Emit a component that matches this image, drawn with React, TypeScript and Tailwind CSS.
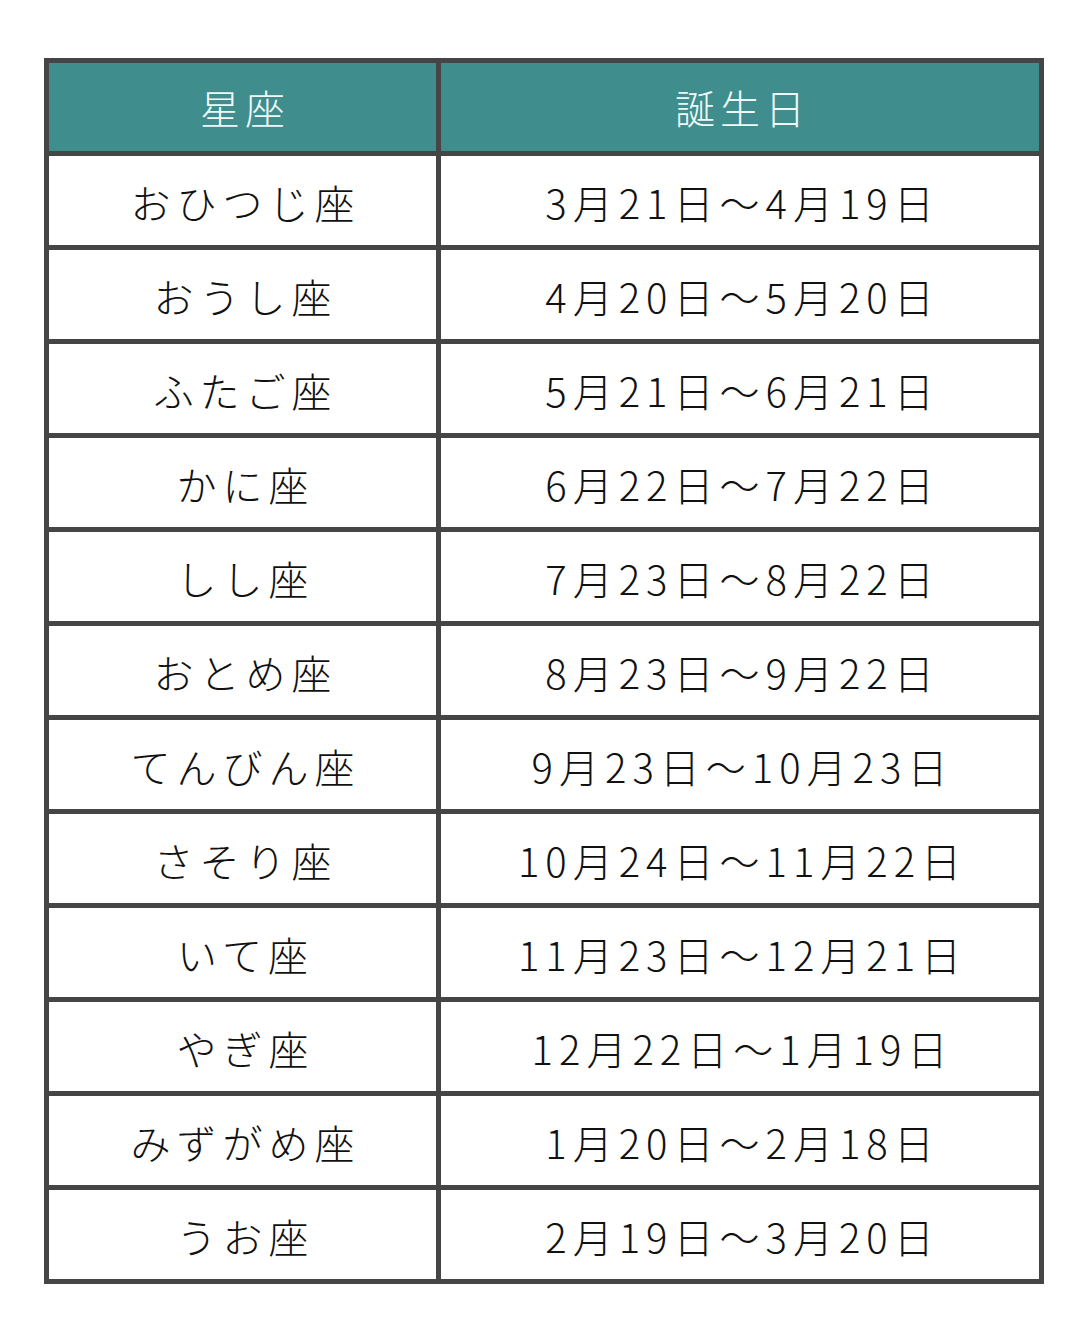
const rows: [string, string][] = [
  ["おひつじ座", "3月21日～4月19日"],
  ["おうし座", "4月20日～5月20日"],
  ["ふたご座", "5月21日～6月21日"],
  ["かに座", "6月22日～7月22日"],
  ["しし座", "7月23日～8月22日"],
  ["おとめ座", "8月23日～9月22日"],
  ["てんびん座", "9月23日～10月23日"],
  ["さそり座", "10月24日～11月22日"],
  ["いて座", "11月23日～12月21日"],
  ["やぎ座", "12月22日～1月19日"],
  ["みずがめ座", "1月20日～2月18日"],
  ["うお座", "2月19日～3月20日"],
];

export default function App() {
  return (
    <div
      className="min-h-[1322px] w-full bg-white pl-[44px] pt-[58px]"
      style={{ fontFamily: '"Noto Sans CJK JP", "Noto Sans", sans-serif' }}
    >
      <div className="grid w-[1000px] grid-cols-[387px_598px] gap-[5px] bg-[#454545] p-[5px]">
        {/* header */}
        <div className="flex h-[88px] items-center justify-center bg-[#3f8d8d] pl-[5px] text-[40px] font-light tracking-[5px] text-[#eefafa]">
          星座
        </div>
        <div className="flex h-[88px] items-center justify-center bg-[#3f8d8d] pl-[5px] text-[40px] font-light tracking-[5px] text-[#eefafa]">
          誕生日
        </div>

        {rows.map(([sign, dates]) => (
          <>
            <div
              key={sign}
              className="flex h-[89px] items-center justify-center bg-white pl-[6px] pt-[2px] text-[40px] font-light tracking-[6px] text-[#111]"
            >
              {sign}
            </div>
            <div
              key={dates}
              className="flex h-[89px] items-center justify-center bg-white pl-[5px] pt-[2px] text-[40px] font-light tracking-[6px] text-[#111]"
            >
              {dates}
            </div>
          </>
        ))}
      </div>
    </div>
  );
}
